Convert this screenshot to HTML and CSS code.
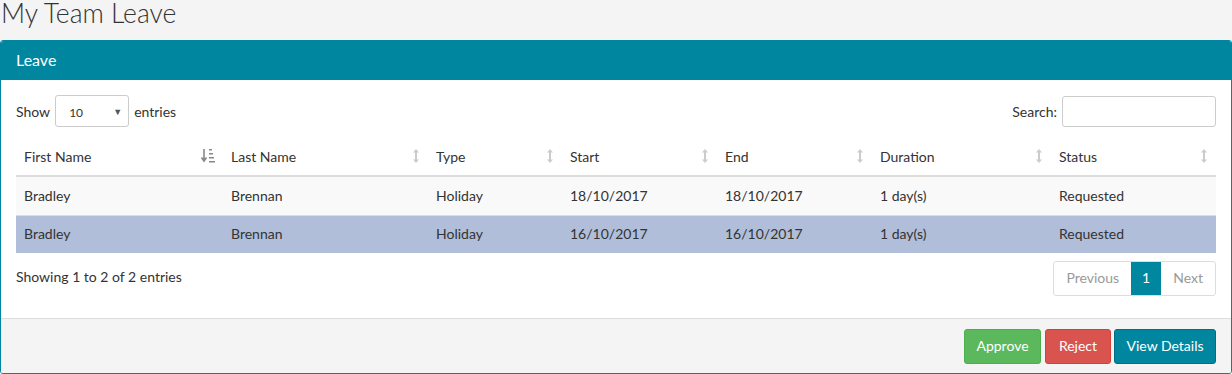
FILE: index.html
```html
<!DOCTYPE html>
<html>
<head>
<meta charset="utf-8">
<link rel="stylesheet" href="styles.css">
</head>
<body>
<h1 class="page-title">My Team Leave</h1>
<div class="panel">
  <div class="panel-heading">Leave</div>
  <div class="panel-body">
    <div class="dt-top">
      <div class="dt-length">Show <span class="select"><span class="select-val">10</span><span class="caret">▼</span></span> entries</div>
      <div class="dt-search">Search: <span class="search-input"></span></div>
    </div>
    <table class="dt">
      <colgroup>
        <col style="width:207px"><col style="width:205px"><col style="width:134px"><col style="width:155px"><col style="width:155px"><col style="width:179px"><col style="width:165px">
      </colgroup>
      <thead>
        <tr>
          <th>First Name<svg class="sort-icon active" width="16" height="16" viewBox="0 0 16 16"><path d="M3 1v11M0.5 9.5L3 13l2.5-3.5" stroke="#888" stroke-width="1.6" fill="none"/><rect x="8" y="1" width="3" height="1.5" fill="#888"/><rect x="8" y="5" width="4" height="1.5" fill="#888"/><rect x="8" y="9" width="5" height="1.5" fill="#888"/><rect x="8" y="13" width="6" height="1.5" fill="#888"/></svg></th>
          <th>Last Name<svg class="sort-icon" width="8" height="16" viewBox="0 0 8 16"><path d="M4 2v12" stroke="#ccc" stroke-width="2"/><path d="M1 4.5L4 1l3 3.5zM1 11.5L4 15l3-3.5z" fill="#ccc"/></svg></th>
          <th>Type<svg class="sort-icon" width="8" height="16" viewBox="0 0 8 16"><path d="M4 2v12" stroke="#ccc" stroke-width="2"/><path d="M1 4.5L4 1l3 3.5zM1 11.5L4 15l3-3.5z" fill="#ccc"/></svg></th>
          <th>Start<svg class="sort-icon" width="8" height="16" viewBox="0 0 8 16"><path d="M4 2v12" stroke="#ccc" stroke-width="2"/><path d="M1 4.5L4 1l3 3.5zM1 11.5L4 15l3-3.5z" fill="#ccc"/></svg></th>
          <th>End<svg class="sort-icon" width="8" height="16" viewBox="0 0 8 16"><path d="M4 2v12" stroke="#ccc" stroke-width="2"/><path d="M1 4.5L4 1l3 3.5zM1 11.5L4 15l3-3.5z" fill="#ccc"/></svg></th>
          <th>Duration<svg class="sort-icon" width="8" height="16" viewBox="0 0 8 16"><path d="M4 2v12" stroke="#ccc" stroke-width="2"/><path d="M1 4.5L4 1l3 3.5zM1 11.5L4 15l3-3.5z" fill="#ccc"/></svg></th>
          <th>Status<svg class="sort-icon" width="8" height="16" viewBox="0 0 8 16"><path d="M4 2v12" stroke="#ccc" stroke-width="2"/><path d="M1 4.5L4 1l3 3.5zM1 11.5L4 15l3-3.5z" fill="#ccc"/></svg></th>
        </tr>
      </thead>
      <tbody>
        <tr class="odd">
          <td>Bradley</td><td>Brennan</td><td>Holiday</td><td>18/10/2017</td><td>18/10/2017</td><td>1 day(s)</td><td>Requested</td>
        </tr>
        <tr class="selected">
          <td>Bradley</td><td>Brennan</td><td>Holiday</td><td>16/10/2017</td><td>16/10/2017</td><td>1 day(s)</td><td>Requested</td>
        </tr>
      </tbody>
    </table>
    <div class="dt-bottom">
      <div class="dt-info">Showing 1 to 2 of 2 entries</div>
      <div class="pagination">
        <span class="page disabled">Previous</span><span class="page current">1</span><span class="page disabled">Next</span>
      </div>
    </div>
  </div>
  <div class="panel-footer">
    <button class="btn btn-approve">Approve</button>
    <button class="btn btn-reject">Reject</button>
    <button class="btn btn-details">View Details</button>
  </div>
</div>
</body>
</html>
```
FILE: styles.css
```css
html, body {
  margin: 0;
  padding: 0;
  background: #f4f4f4;
  font-family: Lato, "Liberation Sans", sans-serif;
  color: #333;
  font-size: 14px;
}
.page-title {
  margin: 0;
  height: 40px;
  font-size: 26.5px;
  font-weight: 300;
  line-height: 26px;
  padding-left: 1px;
  color: #333;
}
.panel {
  width: 1232px;
  box-sizing: border-box;
  border: 1px solid #00869f;
  border-radius: 3px;
  background: #fff;
  overflow: hidden;
  height: 334px;
}
.panel-heading {
  background: #00869f;
  color: #fff;
  font-size: 16px;
  height: 39px;
  line-height: 37px;
  padding-left: 15px;
  border-top-left-radius: 2px;
}
.panel-body {
  padding: 15px 15px 0 15px;
  box-sizing: border-box;
  height: 238px;
}
.dt-top {
  display: flex;
  justify-content: space-between;
  align-items: center;
  height: 32px;
}
.dt-length, .dt-search {
  display: flex;
  align-items: center;
  gap: 5px;
}
.select {
  display: inline-flex;
  align-items: center;
  justify-content: space-between;
  width: 74px;
  height: 32px;
  box-sizing: border-box;
  border: 1px solid #ccc;
  border-radius: 3px;
  padding: 0 6px 0 13px;
  font-size: 12px;
}
.select-val { padding-top: 2px; }
.caret {
  font-size: 9px;
  color: #555;
}
.search-input {
  display: inline-block;
  width: 154px;
  height: 31px;
  box-sizing: border-box;
  border: 1px solid #ccc;
  border-radius: 3px;
}
.dt {
  margin-top: 13px;
  border-collapse: collapse;
  table-layout: fixed;
  width: 1200px;
}
.dt th {
  text-align: left;
  font-weight: 400;
  height: 32px;
  padding: 0 8px 3px 8px;
  border-bottom: 2px solid #ddd;
  position: relative;
  vertical-align: middle;
}
.sort-icon {
  position: absolute;
  right: 8px;
  top: 8px;
}
.sort-icon.active { right: 6px; }
.dt td {
  height: 35px;
  padding: 0 8px 2px 8px;
  border-top: 1px solid #ddd;
  vertical-align: middle;
}
.dt tbody tr:first-child td { border-top: 0; height: 36px; }
.dt tr.odd td { background: #f9f9f9; }
.dt tr.selected td { background: #b0bed9; }
.dt-bottom {
  display: flex;
  justify-content: space-between;
  align-items: flex-start;
  margin-top: 8px;
}
.dt-info { padding-top: 7px; }
.pagination {
  display: flex;
  border: 1px solid #ddd;
  border-radius: 3px;
  height: 35px;
  box-sizing: border-box;
}
.page {
  display: flex;
  align-items: center;
  padding: 0 12px 2px 12px;
  color: #999;
}
.page.current {
  background: #00869f;
  color: #fff;
  padding: 0 11px 2px 11px;
}
.panel-footer {
  background: #f4f4f4;
  border-top: 1px solid #ddd;
  height: 56px;
  box-sizing: border-box;
  display: flex;
  justify-content: flex-end;
  align-items: center;
  gap: 3px;
  padding: 0 15px 0 0;
}
.btn {
  font-family: inherit;
  font-size: 14px;
  color: #fff;
  height: 35px;
  border-radius: 3px;
  border: 1px solid transparent;
  padding: 0 0 2px 0;
  white-space: nowrap;
  cursor: pointer;
}
.btn-approve { background: #5cb85c; border-color: #4cae4c; width: 77px; margin-right: 1px; }
.btn-reject { background: #d9534f; border-color: #d43f3a; width: 66px; }
.btn-details { background: #00869f; border-color: #006f84; width: 102px; }
```
